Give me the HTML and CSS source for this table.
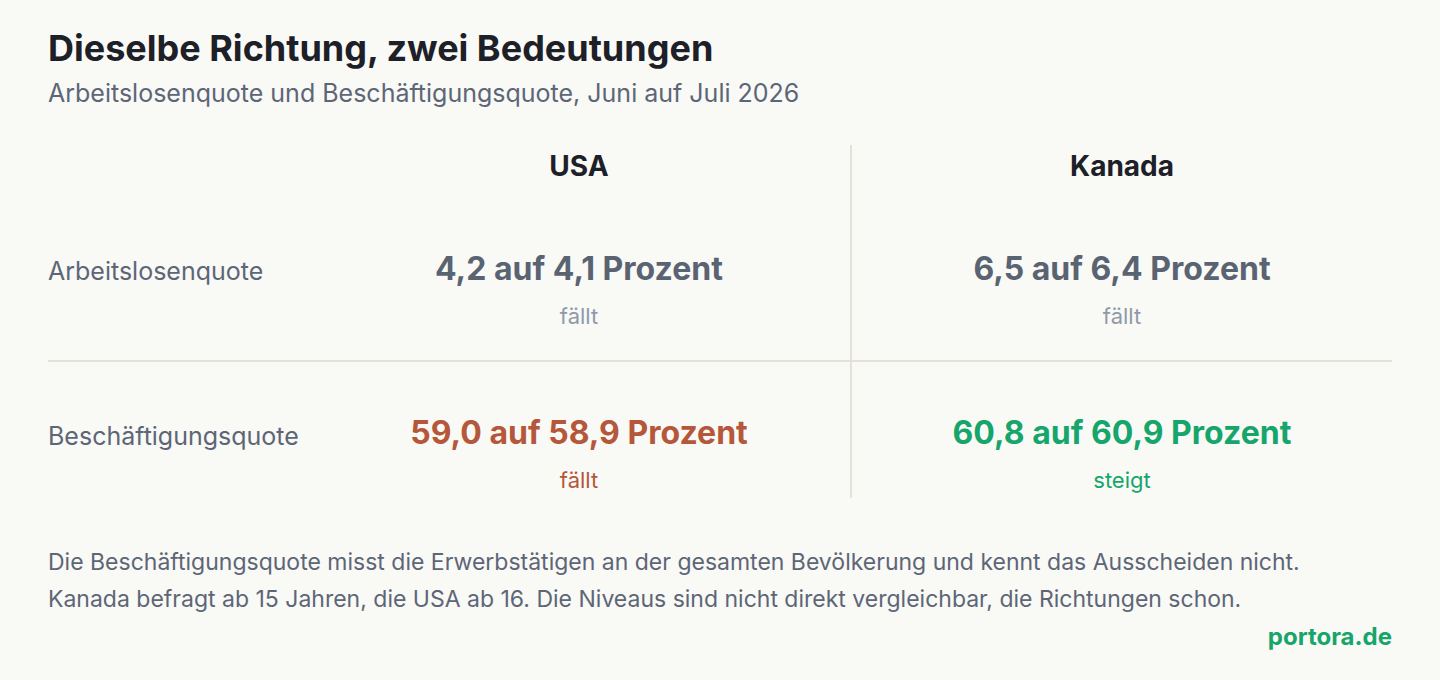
FILE: index.html
```html
<!DOCTYPE html>
<html lang="de">
<head>
<meta charset="utf-8">
<title>Dieselbe Richtung, zwei Bedeutungen</title>
<link rel="stylesheet" href="styles.css">
</head>
<body>
<main class="page">
  <h1 class="title">Dieselbe Richtung, zwei Bedeutungen</h1>
  <p class="subtitle">Arbeitslosenquote und Beschäftigungsquote, Juni auf Juli 2026</p>

  <div class="table">
    <div class="cell head label"></div>
    <div class="cell head">USA</div>
    <div class="cell head right">Kanada</div>

    <div class="cell row1 label">Arbeitslosenquote</div>
    <div class="cell row1">
      <div class="value neutral">4,2 auf 4,1 Prozent</div>
      <div class="dir neutral-dir">fällt</div>
    </div>
    <div class="cell row1 right">
      <div class="value neutral">6,5 auf 6,4 Prozent</div>
      <div class="dir neutral-dir">fällt</div>
    </div>

    <div class="cell row2 label">Beschäftigungsquote</div>
    <div class="cell row2">
      <div class="value bad">59,0 auf 58,9 Prozent</div>
      <div class="dir bad">fällt</div>
    </div>
    <div class="cell row2 right">
      <div class="value good">60,8 auf 60,9 Prozent</div>
      <div class="dir good">steigt</div>
    </div>
  </div>

  <p class="note">Die Beschäftigungsquote misst die Erwerbstätigen an der gesamten Bevölkerung und kennt das Ausscheiden nicht.<br>Kanada befragt ab 15 Jahren, die USA ab 16. Die Niveaus sind nicht direkt vergleichbar, die Richtungen schon.</p>

  <div class="brand">portora.de</div>
</main>
</body>
</html>
```

FILE: styles.css
```css
html, body {
  margin: 0;
  padding: 0;
  background: #f9f9f6;
}

body {
  font-family: Inter, "Noto Sans", "Liberation Sans", sans-serif;
  color: #1d2027;
}

.page {
  width: 1440px;
  height: 680px;
  box-sizing: border-box;
  padding: 28px 48px 0;
}

.title {
  margin: 0;
  font-size: 36px;
  line-height: 40px;
  font-weight: 700;
  color: #1d2027;
}

.subtitle {
  margin: 9px 0 0;
  font-size: 25px;
  line-height: 32px;
  color: #5d6677;
}

.table {
  margin-top: 36px;
  display: grid;
  grid-template-columns: 260px 1fr 1fr;
}

.cell {
  text-align: center;
}

.cell.label {
  text-align: left;
  font-size: 25px;
  line-height: 40px;
  padding-top: 54px;
  color: #5d6677;
}

.cell.head.label {
  padding-top: 4px;
}

.cell.right {
  border-left: 2px solid #e4e1da;
}

.head {
  padding: 4px 0 14px;
  font-size: 28px;
  line-height: 34px;
  font-weight: 700;
  color: #1d2027;
}

.row1 {
  padding: 52px 0 32px;
  border-bottom: 2px solid #e4e1da;
}

.row2 {
  padding: 51px 0 6px;
}

.value {
  font-size: 32px;
  line-height: 40px;
  font-weight: 700;
}

.dir {
  margin-top: 15px;
  font-size: 22px;
  line-height: 24px;
}

.neutral { color: #5a6372; }
.neutral-dir { color: #8f99a8; }
.bad { color: #b5573a; }
.good { color: #16a56a; }

.note {
  margin: 46px 0 0;
  font-size: 23px;
  line-height: 37px;
  color: #5d6677;
}

.brand {
  margin-top: 5px;
  text-align: right;
  font-size: 24px;
  line-height: 28px;
  font-weight: 700;
  color: #16a56a;
}
```
